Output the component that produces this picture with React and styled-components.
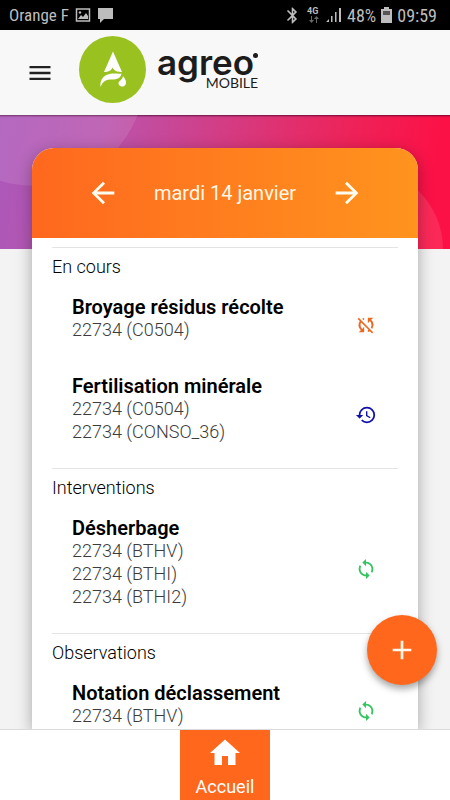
import React from "react";
import styled, { createGlobalStyle } from "styled-components";
import { MdSyncDisabled, MdSync, MdHistory, MdArrowBack, MdArrowForward, MdAdd, MdMenu, MdHome, MdBluetooth } from "react-icons/md";

const GlobalStyle = createGlobalStyle`
  * { box-sizing: border-box; }
  body { margin: 0; font-family: Roboto, "Liberation Sans", sans-serif; }
  h1, h2, h3, p, ul { margin: 0; padding: 0; }
  button { font: inherit; border: 0; background: none; padding: 0; cursor: pointer; }
`;

const Screen = styled.div`
  display: flex;
  flex-direction: column;
  height: 100vh;
  background: #f3f3f3;
  overflow: hidden;
`;

const StatusBar = styled.div`
  flex: none;
  display: flex;
  align-items: center;
  justify-content: space-between;
  height: 30px;
  padding: 0 13px 0 9px;
  background: #000;
  color: #bdbdbd;
  font-family: "Roboto Condensed", "Liberation Sans Narrow", Roboto, sans-serif;
  font-size: 18px;
`;

const StatusGroup = styled.div`
  display: flex;
  align-items: center;
  gap: ${(p) => p.$gap}px;
`;

const Carrier = styled.span`
  font-size: 17px;
`;

const AppBar = styled.header`
  flex: none;
  display: flex;
  align-items: center;
  height: 85px;
  padding: 0 26px;
  background: #f8f8f8;
`;

const MenuButton = styled.button`
  display: flex;
  width: 28px;
  height: 28px;
  color: #222;
`;

const Brand = styled.div`
  display: flex;
  align-items: center;
  gap: 11px;
  margin-left: 25px;
  padding-bottom: 6px;
`;

const Wordmark = styled.div`
  position: relative;
  color: #1c1c1c;
  text-align: right;

  &::after {
    content: "";
    position: absolute;
    top: 4px;
    right: 0;
    width: 5px;
    height: 5px;
    border-radius: 50%;
    background: #1c1c1c;
  }
`;

const BrandName = styled.div`
  padding-right: 4px;
  font-family: Inter, sans-serif;
  font-size: 35px;
  font-weight: 600;
  line-height: 26px;
`;

const BrandProduct = styled.div`
  font-family: Lato, sans-serif;
  font-size: 14px;
  line-height: 16px;
`;

const Main = styled.main`
  flex: 1;
  min-height: 0;
  display: grid;
  grid-template: auto 1fr / 1fr;
  position: relative;
`;

const Hero = styled.div`
  grid-area: 1 / 1;
  height: 134px;
  overflow: hidden;
  background: linear-gradient(100deg, #ac58ba 0%, #b955ae 22%, #d63a80 50%, #ee2258 75%, #fc1146 94%);
  box-shadow: inset 0 3px 2px -2px rgba(60, 0, 40, 0.7);
`;

const Bubbles = styled.svg`
  display: block;
  width: 100%;
  height: 100%;
`;

const Card = styled.section`
  grid-area: 1 / 1 / 3 / 2;
  min-height: 0;
  margin: 33px 32px 0;
  background: #fff;
  border-radius: 22px 22px 0 0;
  box-shadow: 0 4px 16px rgba(0, 0, 0, 0.32);
  overflow: hidden;
  z-index: 1;
`;

const DayBar = styled.div`
  display: flex;
  align-items: center;
  justify-content: space-between;
  height: 90px;
  padding: 0 54px;
  color: #fff8e8;
  background: linear-gradient(90deg, #ff681e, #ff941e);
`;

const ArrowButton = styled.button`
  display: flex;
  color: #fffdf0;
`;

const Day = styled.h1`
  font-size: 20px;
  font-weight: 400;
`;

const Sections = styled.div`
  padding: 9px 20px 0;
`;

const Group = styled.section`
  border-top: 1px solid #e4e4e4;
  padding: 8px 0 13px;
`;

const GroupName = styled.h2`
  margin-bottom: 18px;
  color: #000;
  font-size: 18px;
  font-weight: 300;
  line-height: 22px;
`;

const Entries = styled.ul`
  display: grid;
  gap: 22px;
  list-style: none;
`;

const Entry = styled.li`
  display: flex;
  align-items: center;
  justify-content: space-between;
  padding: 0 21px 12px 20px;
`;

const EntryTitle = styled.h3`
  color: #000;
  font-size: 20px;
  font-weight: 600;
  line-height: 22px;
`;

const Plot = styled.p`
  color: #3c3c3c;
  font-size: 18px;
  font-weight: 300;
  line-height: 23px;
`;

const StateIcon = styled.span`
  display: flex;
  padding-top: 12px;
  color: ${(p) => p.$color};
`;

const AddButton = styled.button`
  position: absolute;
  right: 13px;
  bottom: 44px;
  z-index: 2;
  display: grid;
  place-items: center;
  width: 70px;
  height: 70px;
  border-radius: 50%;
  background: #ff671d;
  color: #fff8ea;
  box-shadow: 0 4px 7px rgba(0, 0, 0, 0.35);
`;

const TabBar = styled.nav`
  flex: none;
  z-index: 3;
  display: flex;
  justify-content: center;
  height: 71px;
  border-top: 1px solid #dadada;
  background: #fff;
`;

const Tab = styled.a`
  display: flex;
  flex-direction: column;
  align-items: center;
  gap: 5px;
  width: 90px;
  padding-top: 5px;
  background: #ff671d;
  color: #fff;
  font-size: 18px;
  line-height: 22px;
  text-decoration: none;
`;

const icons = {
  paused: { Icon: MdSyncDisabled, color: "#e8691f", label: "Synchronisation désactivée" },
  pending: { Icon: MdHistory, color: "#1010a8", label: "En attente" },
  synced: { Icon: MdSync, color: "#33c45f", label: "Synchronisé" },
};

const groups = [
  {
    name: "En cours",
    entries: [
      { title: "Broyage résidus récolte", plots: ["22734 (C0504)"], state: "paused" },
      { title: "Fertilisation minérale", plots: ["22734 (C0504)", "22734 (CONSO_36)"], state: "pending" },
    ],
  },
  {
    name: "Interventions",
    entries: [{ title: "Désherbage", plots: ["22734 (BTHV)", "22734 (BTHI)", "22734 (BTHI2)"], state: "synced" }],
  },
  {
    name: "Observations",
    entries: [{ title: "Notation déclassement", plots: ["22734 (BTHV)"], state: "synced" }],
  },
];

function LogoMark() {
  return (
    <svg width="67" height="67" viewBox="0 0 67 67" aria-hidden="true">
      <circle cx="33.5" cy="33.5" r="33.5" fill="#99c221" />
      <path d="M34 15.500 L43 36 C39 36 35.500 35.500 33.500 31.500 C32 35 29 36 25 36 Z" fill="#fff" />
      <path d="M21.500 51 C20.500 42.500 26 38 33 37.500 C37 37.300 40 38 42.500 37.500 C42 42 38 43.500 33 43.500 C27 43.500 24 45 21.500 51 Z" fill="#fff" />
      <path d="M44 40 C46.500 43 47.500 45.500 46.800 48 C45.500 51.500 40 51.500 39.500 47.500 C39.500 45 43.500 44 44 40 Z" fill="#fff" />
    </svg>
  );
}

function PictureIcon() {
  return (
    <svg width="16" height="16" viewBox="0 0 16 16" fill="none" stroke="#bdbdbd" strokeWidth="1.5">
      <path d="M1.500 2h13v12h-13z" />
      <path d="M3 12l3-4 2 2 3-4 2 3v3z" fill="#bdbdbd" stroke="none" />
      <circle cx="5" cy="5.500" r="1.200" fill="#bdbdbd" stroke="none" />
    </svg>
  );
}

function SignalIcons() {
  return (
    <>
      <MdBluetooth size={19} />
      <svg width="14" height="18" viewBox="0 0 14 18" fill="#bdbdbd">
        <text x="0" y="8" fontFamily="Roboto" fontSize="9" fontWeight="700">4G</text>
        <path d="M4 10h1v4h2l-2.500 3L2 14h2z M9.500 10l2.500 3h-2v4H9v-4H7z" opacity=".55" />
      </svg>
      <svg width="16" height="16" viewBox="0 0 16 16" fill="#bdbdbd">
        <path d="M0 15l3-3v3zM5 9h1.500v6H5zM9 5h1.500v10H9zM13 1h2v14h-2z" />
      </svg>
    </>
  );
}

export default function App() {
  return (
    <Screen>
      <GlobalStyle />
      <StatusBar>
        <StatusGroup $gap={6}>
          <Carrier>Orange F</Carrier>
          <PictureIcon />
          <svg width="16" height="16" viewBox="0 0 16 16" fill="#bdbdbd">
            <path d="M1 1h15v11H7l-4 4v-4H1z" />
          </svg>
        </StatusGroup>
        <StatusGroup $gap={5}>
          <SignalIcons />
          <span>48%</span>
          <svg width="11" height="16" viewBox="0 0 11 16">
            <path d="M3 0h5v2h3v14H0V2h3z" fill="#bdbdbd" />
            <path d="M2 4h7v4H2z" fill="#555" />
          </svg>
          <span>09:59</span>
        </StatusGroup>
      </StatusBar>
      <AppBar>
        <MenuButton aria-label="Menu"><MdMenu size={28} /></MenuButton>
        <Brand>
          <LogoMark />
          <Wordmark>
            <BrandName>agreo</BrandName>
            <BrandProduct>MOBILE</BrandProduct>
          </Wordmark>
        </Brand>
      </AppBar>
      <Main>
        <Hero>
          <Bubbles viewBox="0 0 450 134" preserveAspectRatio="xMidYMin slice" fill="#fff" aria-hidden="true">
            <circle cx="34" cy="-40" r="111" opacity="0.1" />
            <circle cx="362" cy="134" r="81" opacity="0.1" />
          </Bubbles>
        </Hero>
        <Card>
          <DayBar>
            <ArrowButton aria-label="Jour précédent"><MdArrowBack size={34} /></ArrowButton>
            <Day>mardi 14 janvier</Day>
            <ArrowButton aria-label="Jour suivant"><MdArrowForward size={34} /></ArrowButton>
          </DayBar>
          <Sections>
            {groups.map((group) => (
              <Group key={group.name}>
                <GroupName>{group.name}</GroupName>
                <Entries>
                  {group.entries.map(({ title, plots, state }) => {
                    const { Icon, color, label } = icons[state];
                    return (
                      <Entry key={title}>
                        <div>
                          <EntryTitle>{title}</EntryTitle>
                          {plots.map((plot) => <Plot key={plot}>{plot}</Plot>)}
                        </div>
                        <StateIcon $color={color} role="img" aria-label={label}><Icon size={22} /></StateIcon>
                      </Entry>
                    );
                  })}
                </Entries>
              </Group>
            ))}
          </Sections>
        </Card>
        <AddButton aria-label="Ajouter"><MdAdd size={32} /></AddButton>
      </Main>
      <TabBar>
        <Tab href="#accueil"><MdHome size={36} /><span>Accueil</span></Tab>
      </TabBar>
    </Screen>
  );
}
